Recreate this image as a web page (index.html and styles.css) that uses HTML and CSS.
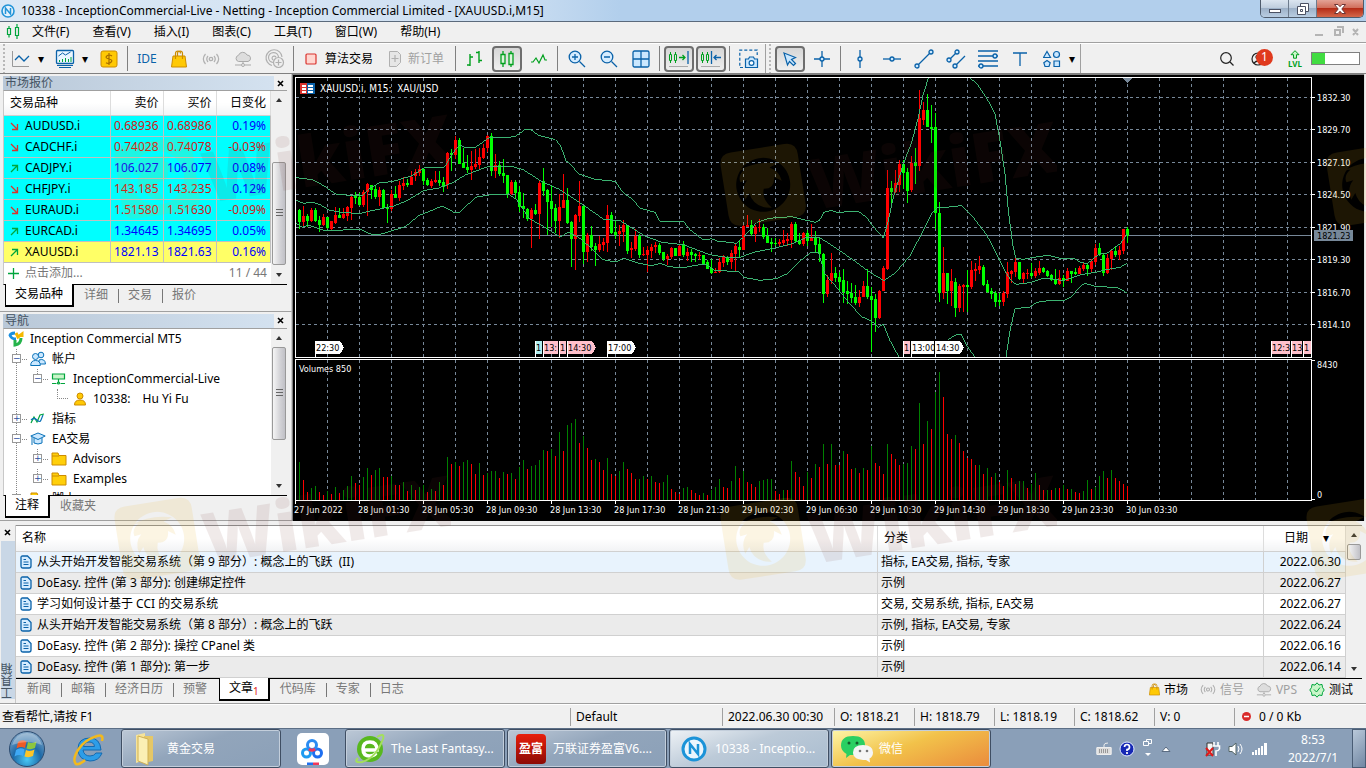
FILE: index.html
```html
<!DOCTYPE html>
<html lang="zh-CN">
<head>
  <meta charset="UTF-8">
  <meta name="viewport" content="width=device-width, initial-scale=1.0">
  <title>10338 - InceptionCommercial-Live</title>
  <link rel="stylesheet" href="styles.css">
</head>
<body>
  <svg class="defs" width="0" height="0" aria-hidden="true">
    <symbol id="doc" viewBox="0 0 12 14"><path d="M2.500 1h5l3.500 3.500V11q0 2-2 2H3q-2 0-2-2V2.500Q1 1 2.500 1z" fill="#d5ecff" stroke="#0a62a9" stroke-width="1.300"/><path d="M3.500 4.500h2.500M3.500 7h5M3.500 9.500h5" stroke="#0a62a9" stroke-width="1.200"/></symbol>
    <symbol id="down" viewBox="0 0 9 9"><path d="M1 1l6.500 6.500M7.500 2v5.500H2" fill="none" stroke="#d9332e" stroke-width="1.300"/></symbol>
    <symbol id="up" viewBox="0 0 9 9"><path d="M1 8l6.500-6.500M2 1.500h5.500V7" fill="none" stroke="#00a53c" stroke-width="1.300"/></symbol>
    <symbol id="folder" viewBox="0 0 16 14"><path d="M1 1h6l1 2.500h7V13H1z" fill="#ffcf0a" stroke="#cc8c00"/><path d="M1 4h7" stroke="#cc8c00"/></symbol>
    <symbol id="bag" viewBox="0 0 16 18"><path d="M2 6h12l1.500 11H.5z" fill="#ffc905" stroke="#cc8c00"/><path d="M4.500 9V3.500Q4.500 1 7 1t2.500 2.500M6.500 6V3.500Q6.500 1 9 1t2.500 2.500V9" fill="none" stroke="#cc8c00" stroke-width="1.200"/></symbol>
    <symbol id="signal" viewBox="0 0 18 12"><circle cx="9" cy="6" r="1.700" fill="none" stroke="#b0b0b0" stroke-width="1.300"/><path d="M3.500 1Q-.8 6 3.500 11M6 3Q3.500 6 6 9M14.500 1q4.300 5 0 10M12 3q2.500 3 0 6" fill="none" stroke="#b0b0b0" stroke-width="1.200"/></symbol>
    <symbol id="cloud" viewBox="0 0 18 16"><path d="M4.500 10.500a3.200 3.200 0 0 1 0-6.200A4.600 4.600 0 0 1 13 4a3.300 3.300 0 0 1 1 6.500z" fill="#ddd" stroke="#aaa"/><path d="M9 11v2M1 14h6M11 14h6" stroke="#aaa"/><circle cx="9" cy="14" r="1.500" fill="#eee" stroke="#aaa"/></symbol>
    <symbol id="mark" viewBox="0 0 340 120">
      <g transform="translate(0 10) rotate(-9 45 60)">
        <path fill="#e8b020" fill-rule="evenodd" d="M19 24h54q12 0 12 12v50q0 12-12 12H19Q7 98 7 86V36q0-12 12-12zM46 34a27 27 0 1 0 .1 0z"/>
        <path fill="#e8b020" d="M24 43q18-7 40-1l-9 3q9 5 10 15l-7-5q-1 12-12 10-4 10 5 20-18-2-20-18l-5 6q-3-12 5-19l-7 1q-2-7 6-12z"/>
      </g>
      <text x="96" y="96" transform="rotate(-9 96 96)" class="mark-text">WikiFX</text>
    </symbol>
  </svg>

  <header class="titlebar">
    <svg width="14" height="14" viewBox="0 0 14 14"><circle cx="7" cy="7" r="6" fill="#e4f2fc" stroke="#2394d8" stroke-width="1.600"/><path d="M4.500 10V4l5 6V4" fill="none" stroke="#2394d8" stroke-width="1.500"/></svg>
    <h1>10338 - InceptionCommercial-Live - Netting - Inception Commercial Limited - [XAUUSD.i,M15]</h1>
    <div class="window-buttons">
      <button aria-label="最小化"><svg width="14" height="12"><rect x="1.500" y="6.500" width="11" height="3" fill="#fff" stroke="#4b5163"/></svg></button>
      <button aria-label="还原"><svg width="14" height="12" fill="#fff" stroke="#4b5163"><path d="M4.500.5h8v8h-8z"/><path d="M1.500 3.500h8v8h-8z"/><path d="M4.500 6.500h2v2h-2z"/></svg></button>
      <button class="close" aria-label="关闭"><svg width="14" height="12"><path d="M1.500 1.500h3.500L7 3.700 9 1.500h3.500L8.800 6l3.700 4.500H9L7 8.300 5 10.500H1.500L5.200 6z" fill="#fff" stroke="#6c3535"/></svg></button>
    </div>
  </header>

  <nav class="menubar">
    <svg width="14" height="16" fill="none" stroke="#00a53c" stroke-width="1.200"><path d="M1.500 4.500h3v6h-3zM9.500 3.500h3v8h-3zM3 2v2.500M3 10.500v3M11 0v3.500M11 11.500V15"/></svg>
    <button>文件(F)</button>
    <button>查看(V)</button>
    <button>插入(I)</button>
    <button>图表(C)</button>
    <button>工具(T)</button>
    <button>窗口(W)</button>
    <button>帮助(H)</button>
    <svg class="mdi" width="48" height="12" fill="none" stroke="#b4b4b4" stroke-width="2"><path d="M1 9h8M21 4h5v5h-5zM23 1h6v6M39 3l5 6M44 3l-5 6"/></svg>
  </nav>

  <div class="toolbar">
    <div class="tools tools-main">
      <button class="tool" aria-label="图表"><svg width="20" height="18" fill="none"><path d="M1.500 1v15.500H18" stroke="#999"/><path d="M4 10l4-4 5 5 5-5" stroke="#0a62a9" stroke-width="1.300"/></svg></button>
      <button class="drop" aria-label="更多">▾</button>
      <button class="tool" aria-label="指标"><svg width="20" height="20" fill="none"><rect x="1.500" y="1.500" width="17" height="13" rx="1" fill="#eaf6ff" stroke="#0a62a9" stroke-width="1.300"/><path d="M3.500 7l4-3 3 2 5-3" stroke="#0a62a9"/><path d="M4.500 13v-2M7.500 13v-3M10.500 13V9M13.500 13v-3M16 13V8" stroke="#00a53c"/><path d="M2 16.500h16M4 18.500h12" stroke="#0a62a9"/></svg></button>
      <button class="drop" aria-label="更多">▾</button>
      <button class="tool" aria-label="报价"><svg width="18" height="18"><rect x="1" y="1" width="16" height="16" rx="2" fill="#ffc905" stroke="#cc8c00"/><path d="M12 6Q9 4 6.800 6T9 9t2 3.200-5 .6M9 3v12" fill="none" stroke="#a66b00" stroke-width="1.200"/></svg></button>
      <i class="sep"></i>
      <button class="tool ide">IDE</button>
      <button class="tool" aria-label="市场"><svg width="16" height="18"><use href="#bag"/></svg></button>
      <button class="tool" aria-label="信号"><svg width="18" height="12"><use href="#signal"/></svg></button>
      <button class="tool" aria-label="VPS"><svg width="18" height="16"><use href="#cloud"/></svg></button>
      <button class="tool" aria-label="社区"><svg width="20" height="20" fill="none" stroke="#b0b0b0" stroke-width="1.200"><path d="M7 16.500A8 8 0 1 1 17 8M8 13.500A5 5 0 1 1 13.500 8M8.500 11A2 2 0 1 1 11 8.500"/><circle cx="13.500" cy="13.500" r="5" fill="#eee"/><path d="M13.500 10.500v6M10.500 13.500h6"/></svg></button>
      <i class="sep"></i>
      <button class="labelled"><svg width="16" height="16"><rect x="3" y="3" width="10" height="10" rx="1" fill="#ffd6d0" stroke="#d9332e" stroke-width="1.200"/></svg>算法交易</button>
      <button class="labelled muted"><svg width="16" height="18" fill="none" stroke="#b0b0b0"><path d="M2.500 1.500h8l3 3v8l-4 4h-7z" fill="#e6e6e6"/><path d="M8 5v7M4.500 8.500h7" stroke-width="1.200"/></svg>新订单</button>
      <i class="sep"></i>
      <button class="tool" aria-label="柱形图"><svg width="18" height="18" fill="none" stroke="#00a01e" stroke-width="1.400"><path d="M4 4v12M1 15h3M4 7h3M13 1v12M10 2.500h3M13 10.500h3"/></svg></button>
      <button class="tool on" aria-label="蜡烛图"><svg width="16" height="18" fill="#dcf5dc" stroke="#00a01e" stroke-width="1.300"><path d="M4 1v16M12 1v16"/><path d="M2 4.500h4v9H2zM10 3.500h4v11h-4z"/></svg></button>
      <button class="tool" aria-label="线形图"><svg width="18" height="12" fill="none" stroke="#00a01e" stroke-width="1.200"><path d="M1 9h2l3-4 3 5 4-8 2 5h2"/></svg></button>
      <i class="sep"></i>
      <button class="tool" aria-label="放大"><svg width="18" height="18" fill="#d5ecff" stroke="#0a62a9" stroke-width="1.300"><circle cx="7" cy="7" r="5.800"/><path d="M11.500 11.500L17 17M4 7h6M7 4v6"/></svg></button>
      <button class="tool" aria-label="缩小"><svg width="18" height="18" fill="#d5ecff" stroke="#0a62a9" stroke-width="1.300"><circle cx="7" cy="7" r="5.800"/><path d="M11.500 11.500L17 17M4 7h6"/></svg></button>
      <button class="tool" aria-label="平铺"><svg width="18" height="18" fill="#cbe8ff" stroke="#0a62a9" stroke-width="1.300"><rect x="1" y="1" width="16" height="16" rx="1.500"/><path d="M9 1v16M1 9h16"/></svg></button>
      <i class="sep"></i>
      <button class="tool on" aria-label="自动滚动"><svg width="22" height="18" fill="none" stroke="#00a01e"><path d="M2.500 2v2.500M2.500 10.500V13M7.500 2v2.500M7.500 10.500V13M1.500 4.500h2v6h-2zM6.500 4.500h2v6h-2z"/><path d="M11 7.500h6M14.500 5L17 7.500 14.500 10" stroke-width="1.300"/><path d="M20 1v13" stroke="#0a62a9" stroke-width="1.300"/><path d="M1 16.500h19" stroke="#aaa"/></svg></button>
      <button class="tool on" aria-label="图表平移"><svg width="22" height="18" fill="none" stroke="#00a01e"><path d="M2.500 2v2.500M2.500 10.500V13M7.500 2v2.500M7.500 10.500V13M1.500 4.500h2v6h-2zM6.500 4.500h2v6h-2z"/><path d="M11.500 1v13M14 7.500h7M16.500 5L14 7.500l2.500 2.500" stroke="#0a62a9" stroke-width="1.300"/><path d="M1 16.500h19" stroke="#aaa"/></svg></button>
      <i class="sep"></i>
      <button class="tool" aria-label="截图"><svg width="20" height="20" fill="none" stroke="#0a62a9" stroke-width="1.200"><path d="M4 18.500H.8V1.200h17.400V6" stroke-dasharray="3 2"/><path d="M6.500 10h3l1-2h4l1 2h3v8.500h-12z" fill="#cbe8ff"/><circle cx="12.500" cy="14" r="2.400" fill="#fff"/></svg></button>
    </div>
    <div class="tools tools-draw">
      <button class="tool on" aria-label="光标"><svg width="16" height="16"><path d="M2 2l11.500 4.500-4 2 4 4-2 2-4-4-2 3.500z" fill="#cbe8ff" stroke="#0a62a9" stroke-width="1.200"/></svg></button>
      <button class="tool" aria-label="十字线"><svg width="18" height="18" fill="#cbe8ff" stroke="#0a62a9" stroke-width="1.300"><path d="M9 1v16M1 9h16"/><circle cx="9" cy="9" r="2"/></svg></button>
      <i class="sep"></i>
      <button class="tool" aria-label="垂直线"><svg width="18" height="18" fill="#cbe8ff" stroke="#0a62a9" stroke-width="1.300"><path d="M9 0v18"/><circle cx="9" cy="9" r="2"/></svg></button>
      <button class="tool" aria-label="水平线"><svg width="18" height="18" fill="#cbe8ff" stroke="#0a62a9" stroke-width="1.300"><path d="M0 9h18"/><circle cx="9" cy="9" r="2"/></svg></button>
      <button class="tool" aria-label="趋势线"><svg width="20" height="20" fill="#cbe8ff" stroke="#0a62a9" stroke-width="1.300"><path d="M3 17L17 3"/><circle cx="3" cy="17" r="2"/><circle cx="17" cy="3" r="2"/></svg></button>
      <button class="tool" aria-label="通道"><svg width="20" height="20" fill="#cbe8ff" stroke="#0a62a9" stroke-width="1.300"><path d="M3 11l8-8M9 17L19 7"/><circle cx="3" cy="11" r="2"/><circle cx="11" cy="3" r="2"/><circle cx="9" cy="17" r="2"/></svg></button>
      <button class="tool" aria-label="斐波那契"><svg width="20" height="20" fill="#cbe8ff" stroke="#0a62a9" stroke-width="1.300"><path d="M0 2h20M0 7h20M0 12h20M0 17h20"/><circle cx="17" cy="7" r="2"/><circle cx="3" cy="17" r="2"/></svg></button>
      <button class="tool" aria-label="文本"><svg width="14" height="14" fill="none" stroke="#0a62a9" stroke-width="1.300"><path d="M0 1h14M7 1v13"/></svg></button>
      <button class="tool" aria-label="图形"><svg width="18" height="18" fill="#cbe8ff" stroke="#0a62a9" stroke-width="1.200"><path d="M4 1.500L7.500 7.500h-7z"/><circle cx="13.500" cy="4.500" r="3"/><path d="M4 10.500l3.200 2.300L6 16.500H2L.8 12.800z"/><path d="M11 11h5.500v5.500H11z"/></svg></button>
      <button class="drop" aria-label="更多">▾</button>
    </div>
    <div class="tools tools-right">
      <button class="tool" aria-label="搜索"><svg width="16" height="16" fill="none" stroke="#222" stroke-width="1.200"><circle cx="7" cy="7" r="5.300"/><path d="M11 11l3.500 3.500"/></svg></button>
      <button class="tool account" aria-label="通知"><svg width="16" height="16" fill="none" stroke="#222" stroke-width="1.200"><circle cx="7" cy="8" r="6"/><circle cx="7" cy="6" r="2"/><path d="M3 12q4-4 8 0"/></svg><span class="badge">1</span></button>
      <div class="level"><svg width="10" height="9" fill="#c9f5c9" stroke="#00a01e"><path d="M5 .7l4 4H6.500v3.500h-3V4.700H1z"/></svg><span>LVL</span></div>
      <progress class="load" value="28" max="100" aria-label="连接"></progress>
    </div>
  </div>

  <div class="workspace">
    <aside class="sidebar">
      <section class="panel market">
        <div class="caption"><h2>市场报价</h2><button aria-label="关闭市场报价"><svg width="7" height="7"><path d="M1 1l5 5M6 1L1 6" stroke="#000" stroke-width="1.600"/></svg></button></div>
        <div class="panel-body">
          <div class="panel-list">
            <table class="quotes">
              <thead><tr><th>交易品种</th><th>卖价</th><th>买价</th><th>日变化</th></tr></thead>
              <tbody>
                <tr class="fall"><td><svg width="9" height="9"><use href="#down"/></svg>AUDUSD.i</td><td>0.68936</td><td>0.68986</td><td class="plus">0.19%</td></tr>
                <tr class="fall"><td><svg width="9" height="9"><use href="#down"/></svg>CADCHF.i</td><td>0.74028</td><td>0.74078</td><td>-0.03%</td></tr>
                <tr class="rise"><td><svg width="9" height="9"><use href="#up"/></svg>CADJPY.i</td><td>106.027</td><td>106.077</td><td>0.08%</td></tr>
                <tr class="fall"><td><svg width="9" height="9"><use href="#down"/></svg>CHFJPY.i</td><td>143.185</td><td>143.235</td><td class="plus">0.12%</td></tr>
                <tr class="fall"><td><svg width="9" height="9"><use href="#down"/></svg>EURAUD.i</td><td>1.51580</td><td>1.51630</td><td>-0.09%</td></tr>
                <tr class="rise"><td><svg width="9" height="9"><use href="#up"/></svg>EURCAD.i</td><td>1.34645</td><td>1.34695</td><td>0.05%</td></tr>
                <tr class="rise current"><td><svg width="9" height="9"><use href="#up"/></svg>XAUUSD.i</td><td>1821.13</td><td>1821.63</td><td>0.16%</td></tr>
              </tbody>
            </table>
            <div class="add-row"><svg width="11" height="11"><path d="M5.500 0v11M0 5.500h11" stroke="#00a53c" stroke-width="1.300"/></svg><span>点击添加...</span><span class="count">11 / 44</span></div>
          </div>
          <div class="scroll"><i class="arrow-up"></i><i class="thumb thumb-market"></i><i class="arrow-down"></i></div>
        </div>
        <div class="tabs"><button class="active">交易品种</button><button>详细</button><button>交易</button><button>报价</button></div>
      </section>

      <section class="panel navigator">
        <div class="caption"><h2>导航</h2><button aria-label="关闭导航"><svg width="7" height="7"><path d="M1 1l5 5M6 1L1 6" stroke="#000" stroke-width="1.600"/></svg></button></div>
        <div class="panel-body">
          <ul class="tree panel-list">
            <li><svg width="16" height="16" fill="none" stroke-width="3"><path d="M2 5q0-3 5-3M2 4q1 4 6 4" stroke="#1a8fe0"/><path d="M8 2l2 4 4-3v3" stroke="#f5b800"/><path d="M13 7q0 6-6 7V9" stroke="#25b34b"/></svg>Inception Commercial MT5</li>
            <li class="l1"><i class="box">−</i><svg width="16" height="16" fill="#cbe8ff" stroke="#0a72b9"><circle cx="11" cy="4" r="2.800"/><path d="M9 13V9q6-2 6.500 4z"/><circle cx="5.500" cy="5.500" r="3"/><path d="M.7 14.500q0-5 4.800-5t4.800 5z"/></svg>帐户</li>
            <li class="l2"><i class="box">−</i><svg width="16" height="12" fill="#c9f5c9" stroke="#00a53c" stroke-width="1.200"><path d="M1.500 1h12v5h-12zM7.500 6v4M1 10.500h4.500M9.500 10.500H14"/><circle cx="7.500" cy="10" r="1"/></svg>InceptionCommercial-Live</li>
            <li class="l3"><i class="elbow"></i><svg width="14" height="14" fill="#ffc905" stroke="#cc8c00"><circle cx="7" cy="4" r="3"/><path d="M1.500 13q0-5 5.500-5t5.500 5z"/></svg><span>10338:</span><span class="owner">Hu Yi Fu</span></li>
            <li class="l1"><i class="box">+</i><svg width="16" height="12" fill="none" stroke-width="1.200"><path d="M1 10l3-6 3 5 3-7 4-1" stroke="#00a53c"/><path d="M1 7q3-3 6 0t4 0l2-5" stroke="#0a72b9"/></svg>指标</li>
            <li class="l1"><i class="box">−</i><svg width="16" height="14" fill="#cbe8ff" stroke="#0a72b9"><path d="M4 6v5q4 2 8 0V6"/><path d="M.8 4L8 1l7.200 3L8 7.500zM2 5v8"/></svg>EA交易</li>
            <li class="l2 branch"><i class="box">+</i><svg width="16" height="14"><use href="#folder"/></svg>Advisors</li>
            <li class="l2 branch"><i class="box">+</i><svg width="16" height="14"><use href="#folder"/></svg>Examples</li>
            <li class="l1"><i class="box">+</i><svg width="16" height="14"><use href="#folder"/></svg>脚本</li>
          </ul>
          <div class="scroll"><i class="arrow-up"></i><i class="thumb thumb-nav"></i><i class="arrow-down"></i></div>
        </div>
        <div class="tabs"><button class="active">注释</button><button>收藏夹</button></div>
      </section>
    </aside>
    <main class="chart" id="chart"></main>
  </div>

  <section class="toolbox">
    <div class="rail"><button aria-label="关闭工具箱"><svg width="7" height="7"><path d="M1 1l5 5M6 1L1 6" stroke="#000" stroke-width="1.600"/></svg></button><h2>工具箱</h2></div>
    <div class="toolbox-main">
      <div class="toolbox-list">
        <table class="articles">
          <thead><tr><th>名称</th><th>分类</th><th>日期 <span>▾</span></th></tr></thead>
          <tbody>
            <tr class="hot"><td><svg width="12" height="14"><use href="#doc"/></svg>从头开始开发智能交易系统（第 9 部分）: 概念上的飞跃&nbsp; (II)</td><td>指标, EA交易, 指标, 专家</td><td>2022.06.30</td></tr>
            <tr><td><svg width="12" height="14"><use href="#doc"/></svg>DoEasy. 控件 (第 3 部分): 创建绑定控件</td><td>示例</td><td>2022.06.27</td></tr>
            <tr><td><svg width="12" height="14"><use href="#doc"/></svg>学习如何设计基于 CCI 的交易系统</td><td>交易, 交易系统, 指标, EA交易</td><td>2022.06.27</td></tr>
            <tr><td><svg width="12" height="14"><use href="#doc"/></svg>从头开始开发智能交易系统（第 8 部分）: 概念上的飞跃</td><td>示例, 指标, EA交易, 专家</td><td>2022.06.24</td></tr>
            <tr><td><svg width="12" height="14"><use href="#doc"/></svg>DoEasy. 控件 (第 2 部分): 操控 CPanel 类</td><td>示例</td><td>2022.06.16</td></tr>
            <tr><td><svg width="12" height="14"><use href="#doc"/></svg>DoEasy. 控件 (第 1 部分): 第一步</td><td>示例</td><td>2022.06.14</td></tr>
          </tbody>
        </table>
        <div class="scroll"><i class="arrow-up"></i><i class="thumb thumb-box"></i><i class="arrow-down"></i></div>
      </div>
      <div class="tabs">
        <button>新闻</button><button>邮箱</button><button>经济日历</button><button>预警</button><button class="active">文章<sub>1</sub></button><button>代码库</button><button>专家</button><button>日志</button>
        <div class="services">
          <button><svg width="11" height="13"><use href="#bag"/></svg>市场</button>
          <button class="muted"><svg width="16" height="11"><use href="#signal"/></svg>信号</button>
          <button class="muted"><svg width="16" height="15"><use href="#cloud"/></svg>VPS</button>
          <button><svg width="16" height="16" fill="#c9f5c9" stroke="#00a53c"><path d="M8 .8l2 2.200 3-.6.500 3L15.200 8l-1.700 2.500-.5 3-3-.5-2 2.200L6 13l-3 .5-.5-3L.8 8l1.700-2.500.5-3 3 .6z"/><path d="M5 7.500L7.500 10 11 5.500" fill="none"/></svg>测试</button>
        </div>
      </div>
    </div>
  </section>

  <footer class="statusbar">
    <span class="help">查看帮忙,请按 F1</span>
    <span class="profile">Default</span>
    <span class="when">2022.06.30 00:30</span>
    <span>O: 1818.21</span>
    <span>H: 1818.79</span>
    <span>L: 1818.19</span>
    <span>C: 1818.62</span>
    <span>V: 0</span>
    <span class="net"><svg width="9" height="9"><circle cx="4.500" cy="4.500" r="4.500" fill="#d92b2b"/><path d="M2 4.500h5" stroke="#fff" stroke-width="1.500"/></svg>0 / 0 Kb</span>
  </footer>

  <div class="taskbar">
    <button class="start" aria-label="开始">
      <svg width="38" height="38" viewBox="0 0 38 38"><defs><radialGradient id="orb" cx=".5" cy=".8" r=".8"><stop offset="0" stop-color="#49c8f5"/><stop offset=".5" stop-color="#1d6aa8"/><stop offset="1" stop-color="#86a9c8"/></radialGradient></defs><circle cx="19" cy="19" r="17.500" fill="url(#orb)" stroke="#2b4b70"/><path d="M10 12q4-3 8.500-.5L17 18q-4-2-8.500.5z" fill="#ee5a24"/><path d="M20 12q4 2 8.500-.5L27 18q-4 2-8.500.5z" fill="#8cc63f"/><path d="M8 20q4-3 8.500-.5L15 26q-4-2-8.500.5z" fill="#3fa9f5"/><path d="M18 20q4 2 8.500-.5L25 26q-4 2-8.500.5z" fill="#fdc526"/><path d="M4 15Q8 3 19 3t15 12Q20 9 4 15z" fill="#fff" opacity=".3"/></svg>
    </button>
    <button class="quick" aria-label="Internet Explorer">
      <svg width="34" height="34" viewBox="0 0 34 34" fill="none"><path d="M27 18H11q1 6 7 6 4 0 6-3h6q-3 8-12 8Q6 28 6 17T18 6q10 0 11 12zM11.500 14.500h11Q22 10 17 10t-5.500 4.500z" fill="#2d9de8" stroke="#146ab0"/><path d="M30 9q2-7-5-5Q12 8 6 18T4 32q4 1 9-4" stroke="#f2b91d" stroke-width="2.500"/></svg>
    </button>
    <button class="task"><svg width="32" height="34" viewBox="0 0 32 34"><path d="M6 3l9-2v27l-9 3z" fill="#f6e39a"/><path d="M14 4h9v25l-9 2z" fill="#e5c767"/><path d="M8 4l10 3v26L8 29z" fill="#fbefb4" stroke="#cfb055"/></svg><span>黄金交易</span></button>
    <button class="pinned" aria-label="百度网盘">
      <svg width="32" height="32" viewBox="0 0 32 32" fill="none" stroke-width="3"><rect width="32" height="32" rx="5" fill="#fff"/><circle cx="9.500" cy="20" r="4" stroke="#1e9bf0"/><circle cx="20.500" cy="20" r="4" stroke="#1e6ff0"/><circle cx="15" cy="12" r="4.500" stroke="#2b8bf2"/><path d="M12 16q3 2.500 6 0" stroke="#f0375a"/><path d="M10 31h6" stroke="#1e6ff0"/><path d="M16 31h6" stroke="#f0375a"/></svg>
    </button>
    <button class="task"><svg width="32" height="34" viewBox="0 0 32 34"><circle cx="16" cy="17" r="13" fill="#58b81e"/><path d="M10 18h13q0-8-7-8t-7 7 7 7q4 0 6-3" fill="none" stroke="#fff" stroke-width="3.500"/><path d="M4 26Q-1 31 8 30 22 26 29 7q2-7-6-2" fill="none" stroke="#a4e05c" stroke-width="2"/></svg><span>The Last Fantasy...</span></button>
    <button class="task"><span class="yingfu">盈富</span><span>万联证券盈富V6....</span></button>
    <button class="task task-active"><svg width="32" height="34" viewBox="0 0 32 34"><circle cx="16" cy="17" r="11" fill="#eaf5fd" stroke="#1b93d8" stroke-width="3"/><path d="M12 22V12l8 10V12" fill="none" stroke="#1b93d8" stroke-width="2.500"/></svg><span>10338 - Inceptio...</span></button>
    <button class="task task-alert"><svg width="34" height="34" viewBox="0 0 34 34"><path d="M13 4q12 0 12 9.500T13 23l-3 0-4 3 .5-4Q1 19 1 13.500 1 4 13 4z" fill="#2bcf62"/><circle cx="9" cy="11" r="1.500" fill="#145c2c"/><circle cx="17" cy="11" r="1.500" fill="#145c2c"/><path d="M23 13q10 0 10 7.500 0 4-3.500 6l.5 4-4-2.500q-13 0-13-7.500T23 13z" fill="#f5f5f5"/><circle cx="20" cy="19" r="1.300" fill="#777"/><circle cx="27" cy="19" r="1.300" fill="#777"/></svg><span>微信</span></button>
    <div class="tray">
      <svg width="16" height="14" fill="none" stroke="#eee"><path d="M1 5.500h14v7H1zM8 5V3q0-2 4-2" /><path d="M1 5.500h14v7H1z" fill="#ddd"/><path d="M3 8h10M3 10h10" stroke="#555" stroke-dasharray="1 1"/></svg>
      <svg width="16" height="16"><circle cx="8" cy="8" r="7" fill="#1528b4" stroke="#dfe8ff"/><path d="M5.500 6q0-2.500 2.500-2.500T10.500 6 8 8.500V10M8 11v2" fill="none" stroke="#fff" stroke-width="1.700"/></svg>
      <svg width="12" height="22" fill="none" stroke="#fff"><path d="M4.500 1.500h5v4h-5z"/><path d="M1.500 3.500h5v4h-5z" fill="#8a9fb8"/><path d="M3 15h6l-3 3z" fill="#fff" stroke="none"/></svg>
      <svg width="10" height="8"><path d="M1 6.500L5 2l4 4.500z" fill="#fff" stroke="#5b6c82"/></svg>
      <svg class="power" width="16" height="18"><path d="M2 3h6v12H2z" fill="#f4f4f4" stroke="#333"/><path d="M9 2v4M13 2v4M7.500 6h7v3q-1 2-3.500 2v5" fill="none" stroke="#fff" stroke-width="1.600"/><path d="M1 8l7 8M8 8l-7 8" stroke="#e01919" stroke-width="2"/></svg>
      <svg width="16" height="16"><path d="M1 5.500h3L8 2v12l-4-3.500H1z" fill="#fff" stroke="#566"/><path d="M10 5q2 3 0 6M12 3q4 5 0 10" fill="none" stroke="#fff"/></svg>
      <svg width="17" height="14" fill="#fff"><path d="M1 10h2v3H1zM4 8h2v5H4zM7 6h2v7H7zM10 4h2v9h-2zM13 1h3v12h-3z"/></svg>
    </div>
    <div class="clock"><span>8:53</span><span>2022/7/1</span></div>
    <button class="peek" aria-label="显示桌面"></button>
  </div>

  <svg class="watermark" aria-hidden="true">
    <use href="#mark" x="111" y="107" width="340" height="120"/>
    <use href="#mark" x="717" y="114" width="340" height="120"/>
    <use href="#mark" x="1323" y="114" width="340" height="120"/>
    <use href="#mark" x="111" y="468" width="340" height="120"/>
    <use href="#mark" x="717" y="468" width="340" height="120"/>
    <use href="#mark" x="1303" y="468" width="340" height="120"/>
  </svg>

  <script src="chart.js"></script>
</body>
</html>
```
FILE: styles.css
```css
* {
  box-sizing: border-box;
}

body {
  margin: 0;
  min-height: 100vh;
  display: flex;
  flex-direction: column;
  position: relative;
  overflow: hidden;
  background: #f0f0f0;
  color: #000;
  font: 12px/16px "Noto Sans", "Noto Sans CJK SC", sans-serif;
}

button {
  margin: 0;
  padding: 0;
  border: 0;
  background: none;
  color: inherit;
  font: inherit;
  white-space: nowrap;
}

h1, h2 {
  margin: 0;
  font-size: 12px;
  font-weight: normal;
}

svg {
  display: block;
  flex: none;
}

.defs {
  position: absolute;
}

/* title bar */
.titlebar {
  height: 22px;
  display: flex;
  align-items: center;
  gap: 6px;
  padding-left: 1px;
  background: linear-gradient(90deg, #dbe8f5, #cfe0f2 500px, #b2cfec 620px);
  border-bottom: 1px solid #5b6a7c;
}

.window-buttons {
  display: flex;
  align-self: flex-start;
  margin: 0 2px 0 auto;
  border: 1px solid #4e5b6c;
  border-top: 0;
  border-radius: 0 0 5px 5px;
  overflow: hidden;
}

.window-buttons button {
  width: 28px;
  height: 17px;
  display: flex;
  align-items: center;
  justify-content: center;
  background: linear-gradient(#dbe5f0, #bccbdc 50%, #9db1c8 50%, #b9cde2);
  border-right: 1px solid #6d7b8d;
}

.window-buttons .close {
  width: 46px;
  border: 0;
  background: linear-gradient(#e3a396, #cf6a57 50%, #b52d18 50%, #d4684b);
}

/* menu */
.menubar {
  height: 21px;
  display: flex;
  align-items: center;
  gap: 23px;
  padding-left: 6px;
  border-bottom: 1px solid #a0a0a0;
}

.menubar svg:first-child {
  margin-right: -11px;
}

.mdi {
  margin: 0 4px 0 auto;
}

/* toolbar */
.toolbar {
  height: 31px;
  display: flex;
  border-top: 1px solid #fff;
  border-bottom: 1px solid #808080;
}

.tools {
  display: flex;
  align-items: center;
}

.tools-main,
.tools-draw {
  padding-left: 8px;
  border-right: 1px solid #a0a0a0;
  background: radial-gradient(circle, #b8b8b8 1px, transparent 1px) 2px 3px / 4px 4px repeat-y;
}

.tools-main {
  padding-left: 5px;
}

.tool {
  width: 32px;
  height: 26px;
  display: flex;
  align-items: center;
  justify-content: center;
}

.tool.on {
  width: 30px;
  margin: 0 1px;
  border: 2px solid #6e6e6e;
  border-radius: 4px;
  background: linear-gradient(#d6d6d6, #efefef);
}

.drop {
  width: 12px;
  padding-right: 4px;
  text-align: center;
}

.ide {
  color: #0a62a9;
}

.sep {
  width: 1px;
  height: 25px;
  margin: 0 3px 0 2px;
  background: #808080;
}

.labelled {
  display: flex;
  align-items: center;
  gap: 6px;
  padding-left: 6px;
}

.labelled + .labelled {
  gap: 5px;
  padding: 0 9px 0 14px;
}

.muted {
  color: #a0a0a0;
}

.tools-right {
  margin-left: auto;
  padding-right: 6px;
}

.account {
  position: relative;
}

.badge {
  position: absolute;
  top: 3px;
  left: 13px;
  width: 17px;
  height: 17px;
  border-radius: 9px;
  background: #e03a1e;
  color: #fff;
}

.level {
  width: 28px;
  margin: 0 2px 0 6px;
  display: flex;
  flex-direction: column;
  align-items: center;
  color: #00a01e;
  font-size: 8px;
  font-weight: bold;
  line-height: 9px;
}

.load {
  width: 49px;
  height: 13px;
  appearance: none;
  border: 1px solid #808080;
}

.load::-webkit-progress-bar {
  background: #fff;
}

.load::-webkit-progress-value {
  background: #41dc41;
}

/* left column */
.workspace {
  flex: 1;
  display: flex;
  min-height: 447px;
}

.sidebar {
  width: 292px;
  flex: none;
  display: flex;
  flex-direction: column;
  border-bottom: 1px solid #a0a0a0;
}

.panel {
  padding: 2px 4px 4px 3px;
  border-right: 1px solid #c8c8c8;
}

.market {
  border-bottom: 1px solid #a0a0a0;
}

.navigator {
  flex: 1;
  padding-bottom: 0;
}

.caption {
  height: 14px;
  display: flex;
  align-items: center;
  background: linear-gradient(90deg, #b9c8d8, #d5e3f1);
  color: #455463;
  line-height: 14px;
}

.caption h2 {
  line-height: 14px;
  margin-left: 2px;
}

.caption button {
  width: 13px;
  height: 14px;
  margin-left: auto;
  display: flex;
  align-items: center;
  justify-content: center;
  background: #f0f0f0;
}

.panel-body {
  display: flex;
  border-bottom: 1px solid #000;
  border-top: 1px solid #a0a0a0;
  border-left: 1px solid #c8c8c8;
}

.panel-list {
  flex: 1;
  background: #fff;
}

table {
  width: 100%;
  border-collapse: collapse;
  table-layout: fixed;
}

td, th {
  height: 21px;
  padding: 0 4px;
  white-space: nowrap;
  overflow: hidden;
}

th {
  height: 24px;
  font-weight: normal;
  text-align: right;
  background: linear-gradient(#fff 50%, #f2f3f5);
  border-right: 1px solid #ddd;
  border-bottom: 1px solid #d0d0d0;
}

th:first-child,
td:first-child {
  text-align: left;
}

.quotes th:first-child {
  width: 106px;
  padding-left: 6px;
}

.quotes th:nth-child(2),
.quotes th:nth-child(3) {
  width: 53px;
}

.quotes td {
  background: #00ffff;
  border: 1px solid #c0c0c0;
  border-left: 0;
  text-align: right;
  padding-left: 0;
}

.quotes td:first-child {
  padding-left: 6px;
  text-align: left;
}

.quotes td svg,
.articles td svg {
  display: inline-block;
  vertical-align: -1px;
}

.quotes td svg {
  margin-right: 6px;
}

.fall td {
  color: #d01818;
}

.rise td,
.fall .plus {
  color: #0000ff;
}

.quotes td:first-child {
  color: #000;
}

.quotes .current td {
  background: #ffff66;
}

.add-row {
  height: 21px;
  display: flex;
  align-items: center;
  gap: 6px;
  padding: 0 4px;
  color: #777;
}

.count {
  margin-left: auto;
}

/* scroll bars */
.scroll {
  width: 16px;
  flex: none;
  display: flex;
  flex-direction: column;
  align-items: center;
  padding: 7px 0;
  background: #f0f0f0;
}

.arrow-up,
.arrow-down {
  border: 3px solid transparent;
  border-top-width: 0;
  border-bottom: 4px solid #333;
}

.arrow-down {
  margin-top: auto;
  transform: rotate(180deg);
}

.thumb {
  width: 14px;
  border: 1px solid #999;
  border-radius: 2px;
  background:
    repeating-linear-gradient(#666 0 1px, transparent 1px 3px) center / 7px 9px no-repeat,
    linear-gradient(90deg, #f5f5f5, #d2d2d6 60%, #c0c0c6);
}

.thumb-market {
  height: 103px;
  margin-top: 60px;
}

.thumb-nav {
  height: 93px;
  margin-top: 7px;
}

.thumb-box {
  height: 16px;
  margin-top: 7px;
  background: linear-gradient(90deg, #f5f5f5, #c0c0c6);
}

/* tabs */
.tabs {
  display: flex;
  height: 22px;
  color: #777;
}

.tabs > button {
  height: 21px;
  padding: 0 10px;
  position: relative;
}

.tabs > button + button:not(.active)::before {
  content: "";
  position: absolute;
  left: 0;
  top: 4px;
  width: 1px;
  height: 14px;
  background: #777;
}

.tabs > .active + button::before {
  display: none;
}

.tabs > .active {
  margin: -1px 0 0 2px;
  height: 23px;
  padding: 0 9px;
  border: 2px solid #000;
  border-top: 0;
  border-left-width: 1px;
  background: #fff;
  color: #000;
}

.toolbox .tabs {
  padding-left: 1px;
}

.tabs sub {
  color: #e01919;
  font-size: 10px;
  line-height: 1;
}

/* navigator tree */
.tree {
  height: 166px;
  margin: 0;
  padding: 0;
  list-style: none;
  overflow: hidden;
}

.tree li {
  height: 20px;
  display: flex;
  align-items: center;
  gap: 6px;
  padding-left: 4px;
}

.tree li + li {
  background: repeating-linear-gradient(#888 0 1px, transparent 1px 2px) 12px 0 / 1px 20px no-repeat;
}

.tree li.l1 {
  padding-left: 8px;
  background:
    repeating-linear-gradient(#888 0 1px, transparent 1px 2px) 12px 0 / 1px 20px no-repeat,
    repeating-linear-gradient(90deg, #888 0 1px, transparent 1px 2px) 18px 10px / 6px 1px no-repeat;
}

.tree li.l2 {
  padding-left: 29px;
  background:
    repeating-linear-gradient(#888 0 1px, transparent 1px 2px) 12px 0 / 1px 20px no-repeat,
    repeating-linear-gradient(#888 0 1px, transparent 1px 2px) 33px 0 / 1px 6px no-repeat,
    repeating-linear-gradient(90deg, #888 0 1px, transparent 1px 2px) 39px 10px / 6px 1px no-repeat;
}

.tree li.l3 {
  padding-left: 53px;
}

.box {
  width: 9px;
  height: 9px;
  margin-right: 3px;
  border: 1px solid #999;
  background: #fff;
  color: #2a4fa0;
  font: normal 9px/7px "DejaVu Sans", sans-serif;
  text-align: center;
}

.elbow {
  width: 11px;
  height: 10px;
  margin: -10px -1px 0 0;
  border: 1px dotted #888;
  border-top: 0;
  border-right: 0;
}

.owner {
  margin-left: 6px;
}

.chart {
  flex: 1;
  min-width: 0;
  margin-right: 1px;
  background: #000;
  border-right: 1px solid #e0e0e0;
}

.chart text {
  font: 9px "DejaVu Sans Condensed", "DejaVu Sans", sans-serif;
  fill: #fff;
}

.chart .symbol {
  font-size: 10px;
}

.chart .on-light {
  fill: #000;
}

/* toolbox */
.toolbox {
  display: flex;
  height: 179px;
  margin-top: 4px;
  border-bottom: 1px solid #a0a0a0;
}

.rail {
  width: 15px;
  flex: none;
  display: flex;
  flex-direction: column;
  align-items: center;
  justify-content: space-between;
  padding: 4px 0;
}

.rail h2 {
  width: 14px;
  line-height: 14px;
  height: 158px;
  writing-mode: vertical-rl;
  transform: rotate(180deg);
  background: #c9d7e6;
  color: #455463;
}

.toolbox-main {
  flex: 1;
  min-width: 0;
  border-left: 1px solid #c8c8c8;
}

.toolbox-list {
  display: flex;
  margin-right: 4px;
  border-top: 1px solid #909090;
  border-bottom: 1px solid #000;
  background: #fff;
}

.articles th {
  height: 25px;
  text-align: left;
  padding-left: 6px;
}

.articles th:nth-child(2) {
  width: 386px;
}

.articles th:last-child {
  width: 82px;
  padding-left: 20px;
}

.articles th span {
  margin-left: 12px;
}

.articles td {
  height: 21px;
  padding: 0 4px 0 3px;
  border-right: 1px solid #d0d0d0;
  border-bottom: 1px solid #d0d0d0;
  background: #fff;
}

.articles td:last-child {
  text-align: right;
}

.articles td svg {
  margin: 0 5px 0 1px;
  vertical-align: -3px;
}

.articles tr:nth-child(even) td {
  background: #ebebeb;
}

.articles .hot td {
  background: #e8f3fd;
}

.services {
  margin-left: auto;
  padding-right: 13px;
  display: flex;
  gap: 12px;
}

.services button {
  display: flex;
  align-items: center;
  gap: 4px;
}

.services button:not(.muted) {
  color: #000;
}

/* status bar */
.statusbar {
  height: 24px;
  display: flex;
  align-items: center;
  border-top: 1px solid #fff;
}

.statusbar span {
  width: 80px;
  padding-left: 5px;
  border-left: 1px solid #a0a0a0;
  line-height: 18px;
  white-space: nowrap;
}

.statusbar .help {
  flex: 1;
  padding-left: 2px;
  border: 0;
}

.statusbar .profile {
  width: 152px;
}

.statusbar .when {
  width: 112px;
}

.statusbar .net {
  width: 132px;
  display: flex;
  align-items: center;
  gap: 8px;
  padding-left: 7px;
}

/* task bar */
.taskbar {
  height: 40px;
  display: flex;
  align-items: center;
  background: #8a9fb8;
  border-top: 1px solid #5c6f86;
  color: #fff;
}

.start {
  margin: 0 26px 0 8px;
}

.quick {
  margin-right: 15px;
}

.pinned {
  margin: 0 16px 0 14px;
}

.task {
  width: 160px;
  height: 39px;
  margin-right: 2px;
  padding-left: 8px;
  display: flex;
  align-items: center;
  gap: 5px;
  border: 1px solid #3f4e63;
  border-radius: 3px;
  box-shadow: inset 0 0 0 1px #c3cedb;
  background: linear-gradient(160deg, #bcc8d6, #92a5bb 45%, #8ba0b8);
}

.task-active {
  background: linear-gradient(160deg, #eef2f6, #bccad8 45%, #a9bccf);
}

.task-alert {
  background: linear-gradient(160deg, #fdf6a8, #f2c24a 45%, #ea8a3c);
}

.yingfu {
  width: 30px;
  height: 30px;
  margin-right: 2px;
  border-radius: 4px;
  background: linear-gradient(#e8200c, #8c0a05);
  font-weight: bold;
  line-height: 30px;
}

.tray {
  margin-left: auto;
  display: flex;
  align-items: center;
  gap: 7px;
}

.power {
  margin-left: 27px;
}

.clock {
  width: 84px;
  padding-left: 6px;
  display: flex;
  flex-direction: column;
  text-align: center;
  line-height: 18px;
}

.peek {
  width: 14px;
  height: 39px;
  border: 1px solid #4a5d75;
  background: linear-gradient(135deg, #b9c8d9, #7288a4);
}

.watermark {
  position: absolute;
  left: 0;
  top: 0;
  width: 100%;
  height: 100%;
  opacity: 0.12;
  pointer-events: none;
}

.mark-text {
  font: 900 70px "Noto Sans", sans-serif;
  fill: #703028;
  fill-opacity: 0.8;
}
```
FILE: chart.js
```js
// colour, high, body top, body bottom, low (three units to a pixel, down from the window top)
const candles = `g 405 408 443 465,r 396 426 443 455,g 420 426 440 460,r 402 408 441 444,g 402 408 440 443,g 426 437 453 473,r 420 430 453 455,g 428 429 461 465
r 441 441 465 471,r 400 423 447 450,g 402 423 431 432,r 402 420 431 435,r 396 400 426 441,r 366 370 402 437,g 354 366 372 389,g 357 369 393 396
r 348 354 393 399,r 327 330 354 426,g 333 333 347 374,g 336 345 368 374,r 339 348 369 396,g 345 348 401 405,g 390 402 405 447,r 348 360 405 411
g 336 360 372 372,r 321 334 372 380,r 309 327 336 348,g 315 327 333 339,r 291 309 333 333,r 285 294 306 321,r 273 286 297 306,g 282 285 321 333
g 312 318 333 336,r 315 321 335 341,r 291 318 324 327,g 291 318 327 336,g 309 324 338 353,r 234 237 332 345,g 225 237 243 291,r 186 198 243 255
g 193 198 269 270,g 222 267 281 282,g 243 279 288 297,r 231 276 288 318,r 225 270 279 285,r 222 249 273 288,r 210 221 252 255,r 183 186 222 234
g 178 186 291 305,r 240 273 290 312,g 261 273 300 306,g 255 297 306 327,g 303 303 360 372,r 318 324 360 363,g 318 324 357 371,g 336 354 399 414
g 357 396 405 432,g 402 405 434 441,r 402 408 435 522,g 390 408 420 423,r 321 327 419 495,g 282 321 351 365,g 345 348 384 483,g 336 381 405 459
g 390 402 441 477,r 360 399 441 492,r 300 378 402 402,g 342 378 446 450,g 441 443 495 579,r 420 423 495 588,r 321 396 426 444,g 396 396 534 570
r 477 483 534 563,g 456 483 519 531,g 507 516 528 576,r 486 510 528 534,r 492 504 513 531,r 393 423 507 534,g 414 423 477 480,g 438 474 483 495
r 453 471 480 516,r 438 453 474 504,g 453 453 531 540,r 504 522 528 552,r 465 486 525 531,g 480 486 543 552,r 519 540 543 546,r 516 528 543 594
r 510 519 531 552,r 504 513 519 537,g 507 513 537 543,g 534 534 555 560,r 540 546 555 573,r 519 522 549 555,g 522 522 546 546,r 510 516 545 546
g 501 513 543 549,r 522 534 546 561,g 525 534 543 564,g 537 540 546 564,r 534 543 546 557,g 543 543 570 570,g 558 564 585 585,g 555 582 597 600
r 582 594 597 597,r 552 564 594 597,r 543 549 567 580,g 546 549 564 573,r 528 537 564 584,r 507 516 540 592,g 501 519 528 549,r 453 456 528 528
r 423 453 459 459,g 438 453 481 486,r 453 459 480 504,r 435 459 462 474,g 450 459 489 495,g 462 486 507 507,g 492 504 510 534,g 492 507 510 516
r 495 504 510 519,r 468 498 507 516,r 477 495 501 515,r 444 450 498 522,g 444 450 501 507,g 477 498 510 513,r 474 477 510 516,g 468 477 501 516
r 450 492 500 500,g 471 489 513 537,g 492 510 540 564,g 537 540 660 687,r 603 618 660 669,r 537 597 621 630,g 579 597 612 624,g 594 609 624 651
g 585 618 654 687,g 621 651 660 690,g 627 657 672 687,g 633 669 687 693,r 648 669 687 699,r 621 636 669 669,g 585 636 669 675,g 639 666 678 834
g 660 675 732 774,r 648 651 732 735,r 576 582 651 651,r 288 342 585 588,g 321 342 354 393,r 288 327 354 357,r 258 270 333 354,g 258 270 297 345
g 282 294 351 387,r 246 267 348 354,g 222 267 276 330,r 48 132 276 291,r 84 108 138 153,g 60 108 159 159,g 93 159 165 207,g 117 159 417 465
g 384 417 657 684,r 519 597 657 675,g 597 597 651 690,r 585 621 651 696,g 612 624 702 729,r 630 636 702 714,r 630 633 639 714,g 588 633 639 714
r 561 588 639 645,r 567 585 591 621,r 546 576 588 600,g 573 579 633 636,g 618 630 654 657,g 642 651 660 675,g 651 657 684 699,g 657 678 684 696
r 651 657 684 696,r 564 594 660 672,r 588 591 600 627,r 552 564 594 609,g 564 564 615 618,r 594 597 615 630,r 585 597 600 615,g 567 597 606 612
r 582 591 606 612,r 561 582 597 603,g 579 582 594 597,g 588 591 606 609,g 600 603 618 621,g 585 615 630 633,r 588 612 630 633,g 603 612 621 639
r 582 591 621 621,g 591 591 600 627,g 582 594 600 603,r 576 582 600 600,r 567 573 585 591,g 570 573 585 606,r 555 561 585 594,r 510 522 564 573
g 507 522 543 546,g 540 543 597 606,r 540 552 597 600,r 525 531 555 588,g 516 531 543 549,r 516 528 543 558,r 465 465 531 540,g 459 465 486 507`;

// distance of each bar's top in the volume window, same units
const volumes = `336g 390r 426r 414g 408g 426r 435r 423g 432r 411g 429r 420g 408g 378g 399r 405r 381g 354g 375r 360g 354g 381r 381r 378g 405r 405r 396g 423r 405g 420r
411g 405g 426r 417g 423r 396g 405r 321g 342r 336g 348r 336g 330g 342r 372r 339g 375r 370g 363g 363g 384r 366g 372r 369g 387r 351g 330g 357r 348g 345g
330g 300g 303r 297g 318r 246g 303r 225g 219g 207g 279r 258g 294r 330r 327g 336r 360r 324g 372r 378r 363g 336g 357r 369r 387r 387g 378g 387r 378g 396r
399r 396g 375g 417r 426r 432r 414g 411g 420r 429r 435r 429g 435r 420g 411g 387g 411r 414r 393g 348g 384r 363g 396r 402r 411r 393g 390g 387g 387g 423r
432r 420g 420r 333g 366r 381r 408r 366g 384r 342g 351r 282g 342r 282g 345r 345r 303g 312r 357r 354g 369r 354g 360r 288g 339r 348r 372r 282g 312r 327r
345r 342g 339g 288g 297r 159g 282r 213g 237r 126g 66g 141r 252r 267r 255g 279r 303r 324r 327r 345r 345g 372r 354g 381r 369g 396r 408r 360g 384r 402r
393g 393g 414r 402g 369g 405r 420r 420g 420r 414g 414r 405g 417r 417g 426r 429r 423g 390g 417r 411g 378g 363g 384r 360g 384r 393r 402r 408r`;

const bands = [
  '11,311 62,317 95,335 131,360 190,366 209,366 233,343 263,326 300,323 360,305 395,282 458,279 480,240 503,213 518,220 550,220 590,192 640,192 670,187 700,166 715,166 740,184 790,197 805,213 822,260 835,270 860,300 910,316 970,322 995,358 1020,375 1045,403 1090,415 1103,441 1175,443 1194,467 1234,498 1259,494 1276,501 1334,508 1354,490 1394,446 1429,433 1499,428 1569,445 1582,440 1596,415 1619,409 1634,415 1699,412 1724,430 1739,452 1774,492 1789,440 1804,370 1834,270 1859,205 1879,130 1894,60 1911,7',
  '2026,7 2054,28 2084,72 2109,120 2124,200 2139,300 2149,410 2162,510 2171,553 2194,556 2224,550 2269,544 2304,553 2349,554 2364,565 2386,569 2409,550 2424,540 2442,540 2469,520 2484,510 2506,480',
  '11,378 35,388 60,384 85,392 110,408 150,416 205,418 240,410 305,396 345,380 395,350 440,342 480,327 520,303 560,288 590,277 660,277 695,288 750,323 800,345 870,390 935,436 985,440 1020,462 1060,487 1110,505 1180,513 1194,520 1254,542 1304,550 1344,550 1384,535 1444,523 1504,508 1544,490 1582,490 1624,517 1684,558 1734,595 1776,620 1809,598 1854,545 1894,470 1919,418 1936,402 1994,397 2009,394 2044,430 2084,483 2114,540 2144,600 2159,622 2172,631 2214,626 2249,614 2284,615 2314,620 2364,603 2414,594 2454,585 2484,580 2506,568',
  '11,447 30,460 50,454 100,470 205,466 235,480 265,481 340,458 380,425 425,407 450,396 490,417 505,414 550,370 590,363 650,360 675,378 712,434 750,455 790,480 805,488 830,475 860,490 895,520 930,556 970,564 995,553 1040,568 1080,575 1105,568 1130,578 1175,582 1194,577 1239,570 1269,590 1339,592 1359,611 1404,619 1454,614 1484,600 1514,570 1554,537 1579,534 1599,600 1634,640 1674,690 1709,728 1739,742 1759,760 1774,750 1794,800 1821,849',
  '1969,797 1994,781 2009,783 2024,815 2049,849',
  '2142,849 2154,770 2169,704 2214,699 2234,685 2274,679 2314,680 2339,668 2364,638 2379,628 2414,638 2474,640 2506,657'
];

const prices = ['1832.30', '1829.70', '1827.10', '1824.50', '1821.90', '1819.30', '1816.70', '1814.10'];
const priceY = [23, 55, 88, 120, 153, 185, 218, 250];
const times = ['27 Jun 2022', '28 Jun 01:30', '28 Jun 05:30', '28 Jun 09:30', '28 Jun 13:30', '28 Jun 17:30', '28 Jun 21:30',
  '29 Jun 02:30', '29 Jun 06:30', '29 Jun 10:30', '29 Jun 14:30', '29 Jun 18:30', '29 Jun 23:30', '30 Jun 03:30'];

// x, width, label, fill, pointed end
const flags = [
  [23, 25, '22:30', '#fff', true], [243, 7, '1', '#b0eef0', false], [251, 15, '13:', '#ffc0cb', false], [267, 7, '1', '#ffc0cb', false],
  [275, 25, '14:30', '#ffc0cb', true], [315, 25, '17:00', '#fff', true], [611, 7, '1', '#ffc0cb', false], [619, 23, '13:00', '#fff', false],
  [643, 25, '14:30', '#fff', true], [979, 19, '12:3', '#ffc0cb', false], [999, 11, '13', '#ffc0cb', false], [1011, 8, '1', '#ffc0cb', false]
];

const chart = document.getElementById('chart');

function line(x1, y1, x2, y2, color, extra) {
  return `<line x1="${x1}" y1="${y1}" x2="${x2}" y2="${y2}" stroke="${color}" ${extra || ''}/>`;
}

function rect(x, y, w, h, color) {
  return `<rect x="${x}" y="${y}" width="${w}" height="${h}" fill="${color}"/>`;
}

function draw() {
  const width = chart.clientWidth;
  const right = width - 53;
  let grid = '';
  for (let x = 35; x < right; x += 32) {
    grid += line(x + 0.5, 4, x + 0.5, 426, '#778899', 'stroke-dasharray="3 3"');
  }
  priceY.forEach(y => {
    grid += line(4, y + 0.5, right, y + 0.5, '#778899', 'stroke-dasharray="3 3"');
  });
  grid += line(4, 161.5, right, 161.5, '#778899');

  let bars = '';
  candles.split(/[,\n]/).forEach((item, i) => {
    const [c, ...v] = item.split(' ');
    const [high, top, bottom, low] = v.map(n => Math.round(n / 3));
    const color = c === 'g' ? '#00ff00' : '#ff0000';
    const x = 7 + i * 4;
    bars += rect(x, high, 1, Math.max(low - high, 1), color);
    bars += rect(x - 1, top, 3, Math.max(bottom - top, 1), color);
  });
  volumes.split(/\s/).forEach((item, i) => {
    const y = 276 + Math.round(parseInt(item) / 3);
    bars += rect(7 + i * 4, y, 1, 426 - y, item.endsWith('g') ? '#008000' : '#ff0000');
  });

  const curves = bands.map(points =>
    `<polyline points="${points}" transform="scale(0.33333)" fill="none" stroke="#3cb371" stroke-width="3"/>`).join('');

  let tags = '';
  flags.forEach(([x, w, label, fill, pointed]) => {
    const end = pointed ? `l4 6.500l-4 6.500` : 'v13';
    tags += `<path d="M${x} 267h${w}${end}H${x}z" fill="${fill}"/>`;
    tags += rect(x - 1, 267, 1, 13, '#000') + rect(x, 267, 1, 16, '#fff');
    tags += `<text class="on-light" x="${x + 1}" y="277">${label}</text>`;
  });

  let axis = `<rect x="3.500" y="3.500" width="${right - 3}" height="280" fill="none" stroke="#fff"/>`;
  axis += `<rect x="3.500" y="285.500" width="${right - 3}" height="141" fill="none" stroke="#fff"/>`;
  prices.forEach((p, i) => {
    axis += line(right, priceY[i] + 0.5, right + 4, priceY[i] + 0.5, '#fff');
    axis += `<text x="${right + 6}" y="${priceY[i] + 4}">${p}</text>`;
  });
  axis += rect(right + 3, 156, 39, 11, '#778899') + `<text class="on-light" x="${right + 6}" y="165">1821.23</text>`;
  axis += line(right, 286.5, right + 4, 286.5, '#fff') + line(right, 425.5, right + 4, 425.5, '#fff');
  axis += `<text x="${right + 6}" y="294">8430</text><text x="${right + 6}" y="424">0</text>`;
  times.forEach((t, i) => {
    axis += line(3.5 + i * 64, 426, 3.5 + i * 64, 430, '#fff');
    axis += `<text x="${2 + i * 64}" y="439">${t}</text>`;
  });

  chart.innerHTML = `<svg width="${width}" height="447" shape-rendering="crispEdges">
    <rect width="${width}" height="1" fill="#808080"/><rect width="1" height="447" fill="#808080"/>
    <clipPath id="plot"><rect x="3" y="3" width="${right - 3}" height="424"/></clipPath>
    <g clip-path="url(#plot)">${grid}${bars}${curves}${tags}</g>${axis}
    <path d="M831 4h9l-4.500 5z" fill="#778899"/>
    <rect x="8" y="9" width="7" height="11" fill="#d9332e"/><rect x="15" y="9" width="8" height="11" fill="#0a62a9"/>
    <path d="M10 11.500h4M10 14.500h4M10 17.500h4M16 11.500h5M16 14.500h5M16 17.500h5" stroke="#fff" stroke-width="2"/>
    <text class="symbol" x="28" y="18">XAUUSD.i, M15:&#160; XAU/USD</text>
    <text x="7" y="298">Volumes 850</text></svg>`;
}

window.addEventListener('resize', draw);
draw();
```
